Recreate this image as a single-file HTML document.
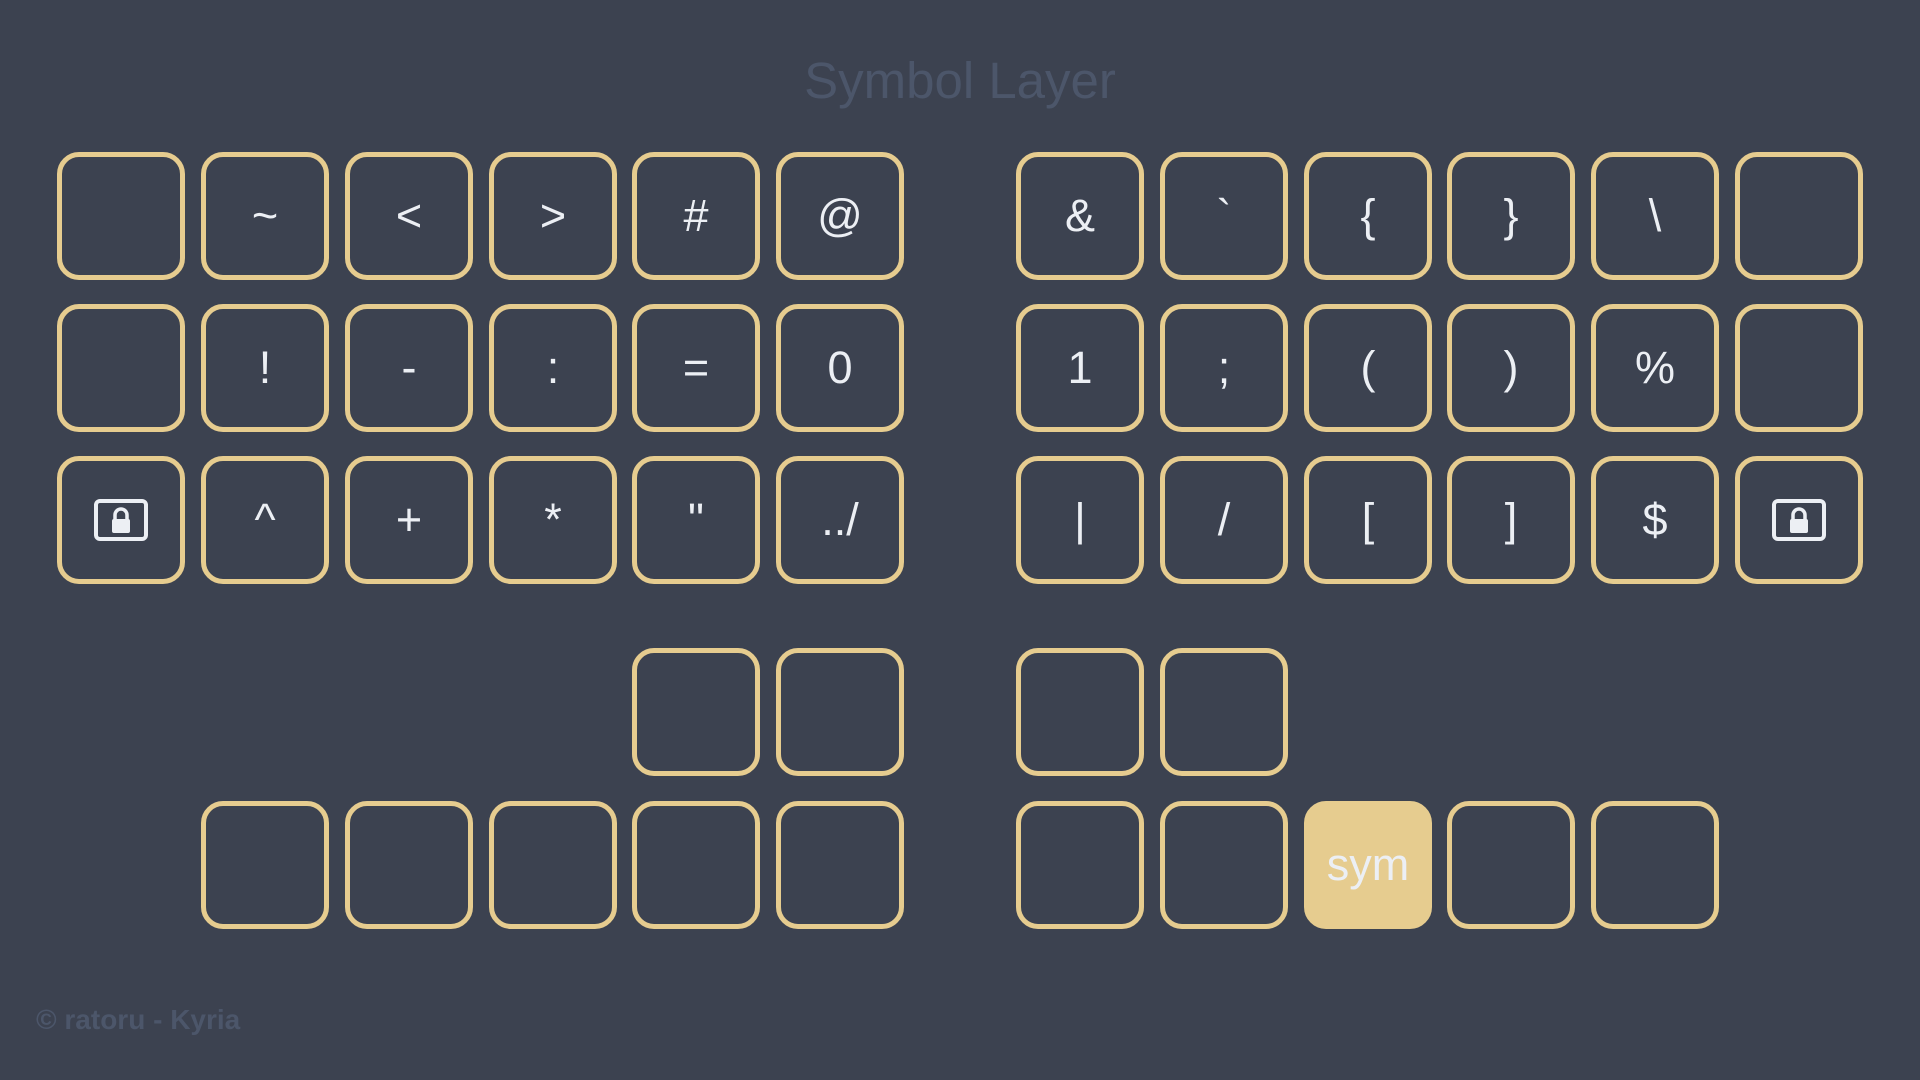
<!DOCTYPE html>
<html><head><meta charset="utf-8"><style>
body{margin:0;width:1920px;height:1080px;background:#3c4250;overflow:hidden;position:relative;font-family:"Liberation Sans","DejaVu Sans",sans-serif;}
.k{position:absolute;width:118px;height:118px;border:5px solid #e6cc8f;border-radius:22px;color:#eceff4;font-size:45px;display:flex;align-items:center;justify-content:center;box-sizing:content-box;}
.k.f{background:#e6cc8f;}
.t{position:absolute;left:0;width:1920px;top:51px;text-align:center;color:#4c566a;font-size:51px;}
.c{position:absolute;left:36px;top:1004px;color:#4c566a;font-size:28px;font-weight:bold;}
</style></head><body>
<div class="t">Symbol Layer</div>
<div class="c">© ratoru - Kyria</div>
<div id="kb"></div>
<script>
var L=[57,201,345,489,632,776],R=[1016,1160,1304,1447,1591,1735],Y=[152,304,456];
var lock='<svg width="56" height="44" viewBox="0 0 56 44"><rect x="3" y="3" width="50" height="38" rx="4" fill="none" stroke="#eceff4" stroke-width="4"/><path d="M22 22v-5a6 6 0 0 1 12 0v5" fill="none" stroke="#eceff4" stroke-width="3.5"/><rect x="19" y="21" width="18" height="14" rx="2" fill="#eceff4"/></svg>';
var rows=[[["","~","<",">","#","@"],["&","`","{","}","\\",""]],[["","!","-",":","=","0"],["1",";","(",")","%",""]],[[lock,"^","+","*","\"","../"],["|","/","[","]","$",lock]]];
var h="";
function key(x,y,t,f){h+='<div class="k'+(f?' f':'')+'" style="left:'+x+'px;top:'+y+'px">'+t+'</div>';}
function esc(s){return s.indexOf('<svg')==0?s:s.replace(/&/g,'&amp;').replace(/</g,'&lt;').replace(/>/g,'&gt;');}
for(var r=0;r<3;r++){for(var i=0;i<6;i++){key(L[i],Y[r],esc(rows[r][0][i]));key(R[i],Y[r],esc(rows[r][1][i]));}}
key(L[4],648,"");key(L[5],648,"");key(R[0],648,"");key(R[1],648,"");
for(var i=1;i<6;i++)key(L[i],801,"");
for(var i=0;i<5;i++)key(R[i],801,i==2?"sym":"",i==2);
document.getElementById("kb").innerHTML=h;
</script>
</body></html>
